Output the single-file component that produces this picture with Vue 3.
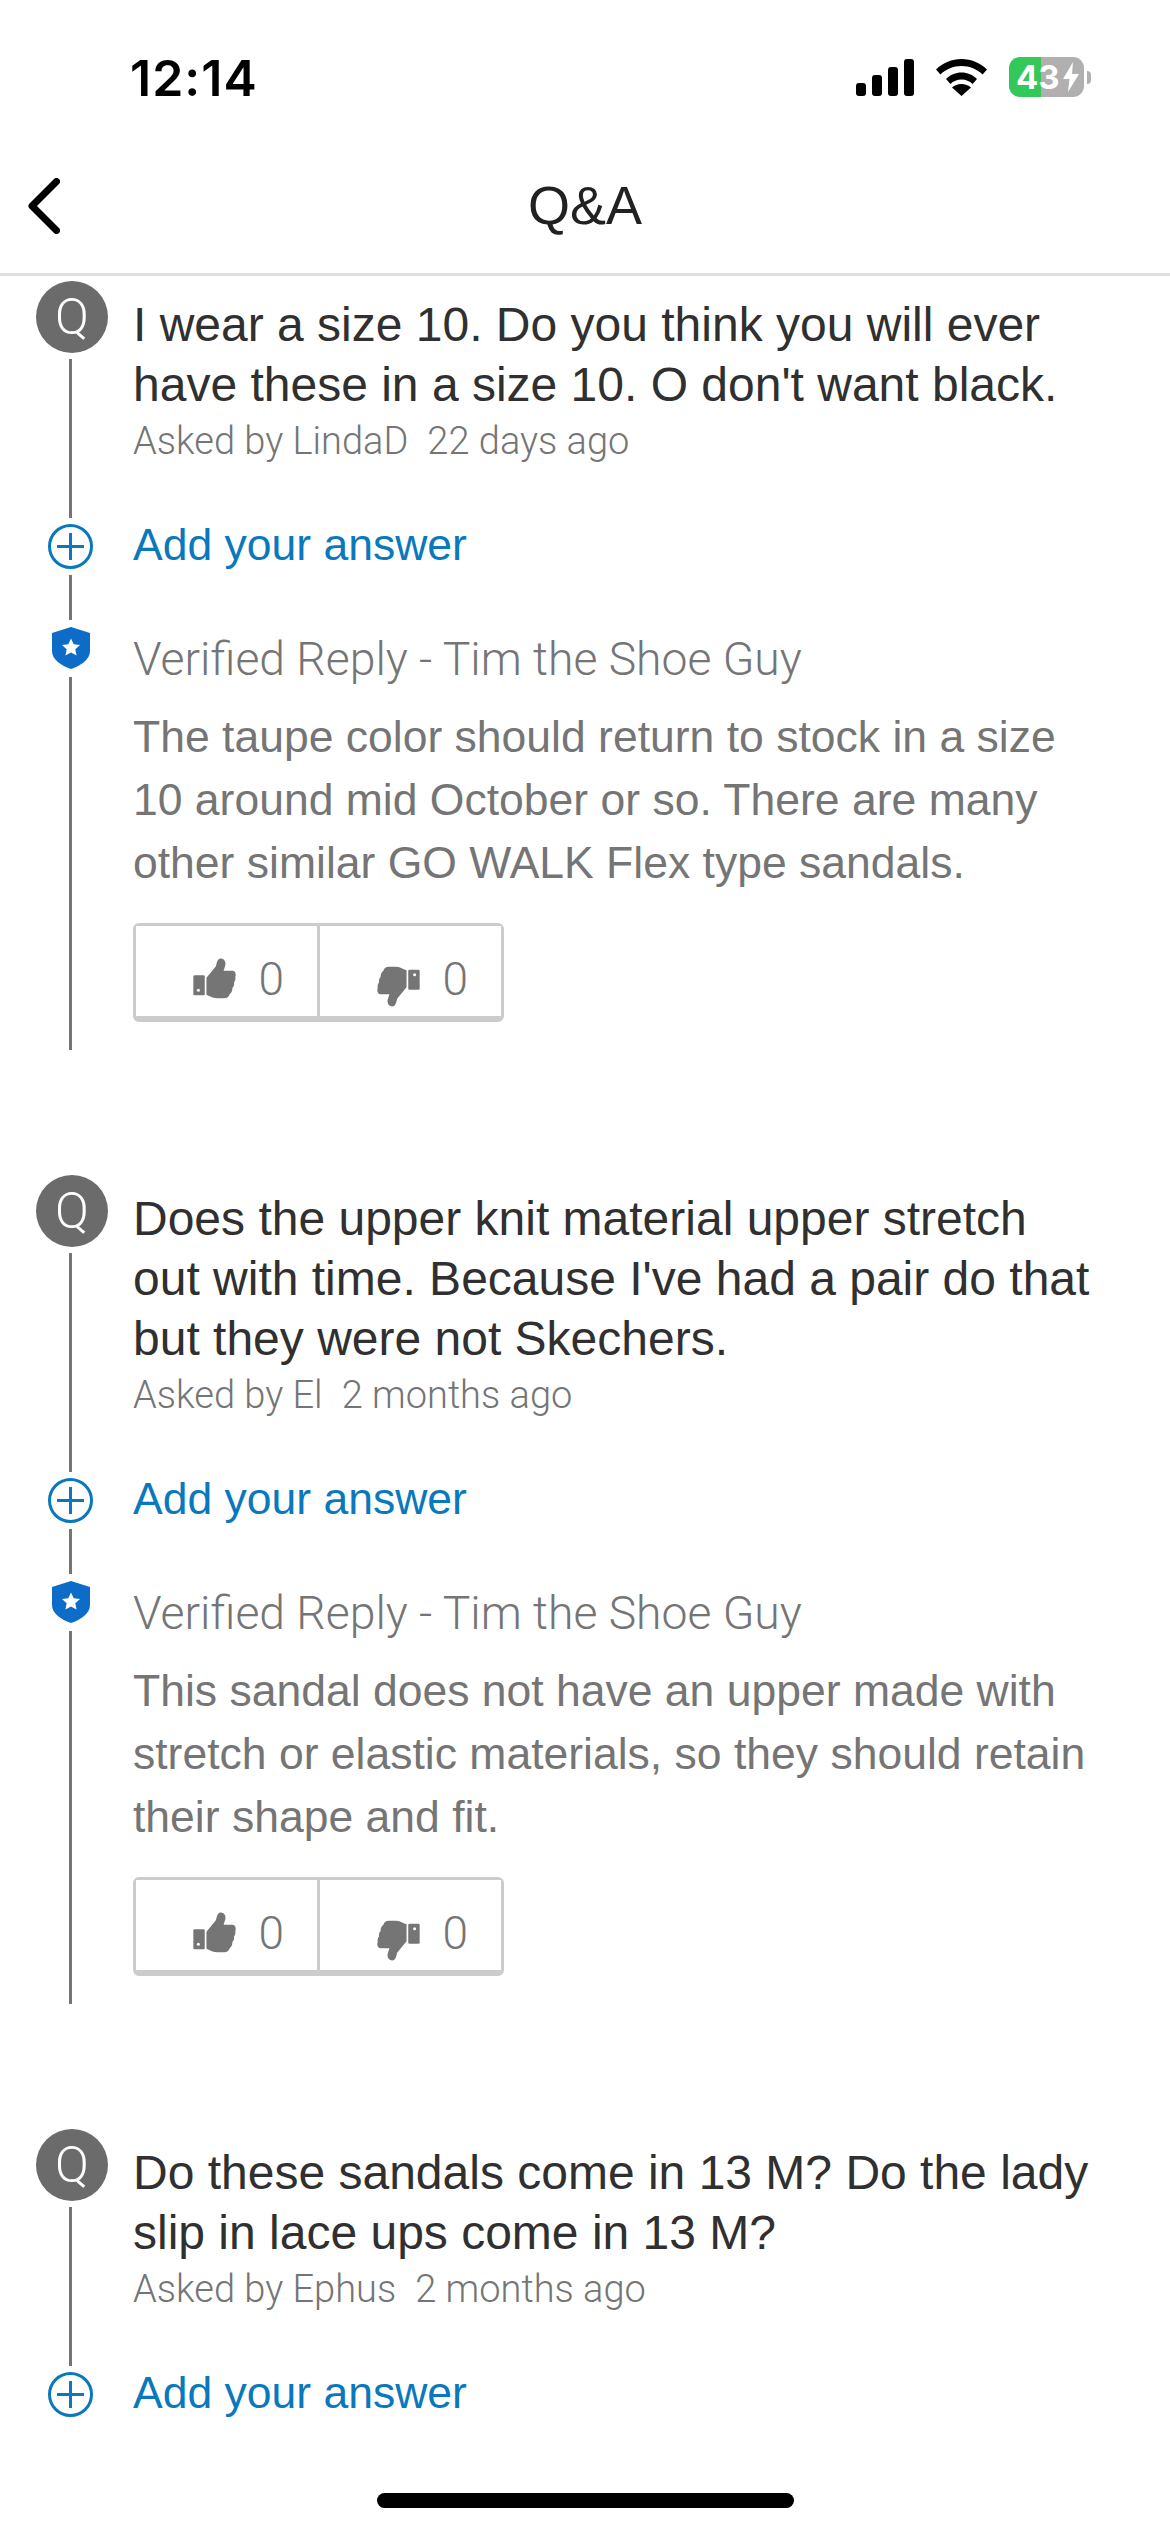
<script setup>
const items = [
    {
        question: "I wear a size 10. Do you think you will ever have these in a size 10. O don't want black.",
        author: 'LindaD',
        age: '22 days ago',
        reply: 'The taupe color should return to stock in a size 10 around mid October or so. There are many other similar GO WALK Flex type sandals.',
    },
    {
        question: "Does the upper knit material upper stretch out with time. Because I've had a pair do that but they were not Skechers.",
        author: 'El',
        age: '2 months ago',
        reply: 'This sandal does not have an upper made with stretch or elastic materials, so they should retain their shape and fit.',
    },
    {
        question: 'Do these sandals come in 13 M? Do the lady slip in lace ups come in 13 M?',
        author: 'Ephus',
        age: '2 months ago',
        reply: '',
    },
];
</script>

<template>
    <div class="screen">
        <div class="status-bar">
            <span class="time">12:14</span>
            <div class="status-icons">
                <svg class="signal" viewBox="0 0 58 37" width="58" height="37">
                    <rect x="0" y="24" width="10" height="13" rx="3" />
                    <rect x="16" y="16" width="10" height="21" rx="3" />
                    <rect x="32" y="8" width="10" height="29" rx="3" />
                    <rect x="48" y="0" width="10" height="37" rx="3" />
                </svg>
                <svg class="wifi" viewBox="0 0 51 37" width="51" height="37">
                    <path d="M0 10.5C7 3.8 15.800 0 25.500 0S44 3.800 51 10.500L46.600 15.500C41 10.200 33.700 7 25.500 7S10 10.200 4.400 15.500Z" />
                    <path d="M10 20C14.200 16 19.500 13.600 25.500 13.600S36.800 16 41 20L36.600 25C33.600 22.200 29.800 20.600 25.500 20.600S17.400 22.200 14.400 25Z" />
                    <path d="M25.500 37L16 28.500C18.500 26.200 21.800 25 25.500 25S32.500 26.200 35 28.500Z" />
                </svg>
                <div class="battery">
                    <div class="battery-body">
                        <span>43</span>
                        <svg viewBox="0 0 16 30" width="16" height="30">
                            <path d="M10 0L0 17H6.500L5 30L16 12H9Z" fill="#fff" />
                        </svg>
                    </div>
                    <i class="battery-cap"></i>
                </div>
            </div>
        </div>

        <header class="nav-bar">
            <svg class="back" viewBox="0 0 32 56" width="32" height="56">
                <path d="M28.500 3.500L4 28L28.500 52.500" fill="none" stroke="#000" stroke-width="7" stroke-linecap="round" stroke-linejoin="round" />
            </svg>
            <h1>Q&amp;A</h1>
        </header>

        <main class="list">
            <section v-for="item in items" :key="item.author" class="qa-item">
                <div class="row question-row">
                    <div class="rail">
                        <span class="q-badge">Q</span>
                        <i class="rail-line"></i>
                    </div>
                    <div class="row-body question-body">
                        <p class="question">{{ item.question }}</p>
                        <p class="meta">
                            <span>Asked by {{ item.author }}</span>
                            <span>{{ item.age }}</span>
                        </p>
                    </div>
                </div>

                <div class="row add-row">
                    <div class="rail">
                        <svg class="plus" viewBox="0 0 45 45" width="45" height="45">
                            <circle cx="22.500" cy="22.500" r="21" fill="none" stroke="#0a78bd" stroke-width="3" />
                            <path d="M22.500 9V36M9 22.500H36" fill="none" stroke="#0a78bd" stroke-width="3" />
                        </svg>
                        <i v-if="item.reply" class="rail-line"></i>
                    </div>
                    <a class="add-link">Add your answer</a>
                </div>

                <div v-if="item.reply" class="row reply-row">
                    <div class="rail rail-reply">
                        <svg class="shield" viewBox="0 0 38 42" width="38" height="42">
                            <path d="M19 0L38 6V24C38 33 28 39 19 42C10 39 0 33 0 24V6Z" fill="#0d6cc8" />
                            <path d="M19 11.500L21.700 17.300L28 18L23.300 22.300L24.600 28.500L19 25.400L13.400 28.500L14.700 22.300L10 18L16.300 17.300Z" fill="#fff" />
                        </svg>
                        <i class="rail-line"></i>
                    </div>
                    <div class="row-body reply-body">
                        <p class="reply-title">Verified Reply - Tim the Shoe Guy</p>
                        <p class="reply-text">{{ item.reply }}</p>
                        <div class="votes">
                            <button v-for="dir in ['up', 'down']" :key="dir" type="button" class="vote">
                                <svg :class="['thumb', dir]" viewBox="250 170 126 122" width="43" height="41">
                                    <rect x="250" y="221" width="34" height="60" rx="4" fill="#757575" />
                                    <circle cx="265" cy="266" r="4.500" fill="#fff" />
                                    <path d="M289 229L316 196C320 190 318 178 328 172C340 170 348 180 345 192L340 208H366C375 208 378 218 375 226C376 234 374 240 371 243C372 250 370 256 366 259C367 268 363 274 358 278C356 286 350 290 342 290H322C310 290 300 284 289 279Z" fill="#757575" />
                                </svg>
                                <span>0</span>
                            </button>
                        </div>
                    </div>
                </div>
            </section>
        </main>

        <footer class="home-bar"><i></i></footer>
    </div>
</template>

<style>
html, body { margin: 0; background: #fff; }
</style>

<style scoped>
.screen{width:1170px;height:2532px;display:flex;flex-direction:column;background:#fff;overflow:hidden;font-family:"Liberation Sans",Arial,sans-serif}
.status-bar{height:160px;flex:none;display:flex;justify-content:space-between;box-sizing:border-box;padding:0 79px 0 130px}
.time{margin-top:50px;font-family:Inter,sans-serif;font-size:50px;font-weight:600;line-height:56px;letter-spacing:1px;color:#000}
.status-icons{display:flex;align-items:flex-start;margin-top:57px;gap:22px}
.signal{margin-top:2px;fill:#000}
.wifi{margin-top:2px;fill:#000}
.battery{display:flex;align-items:center;gap:3px}
.battery-body{width:75px;height:40px;box-sizing:border-box;padding-left:7px;display:flex;align-items:center;gap:3px;border-radius:11px;background:linear-gradient(90deg,#34c759 0,#34c759 32px,#b0b0b0 32px);color:#fff;font-family:Inter,sans-serif;font-size:33px;font-weight:700;line-height:40px}
.battery-cap{width:4px;height:13px;border-radius:0 4px 4px 0;background:#b0b0b0}
.nav-bar{height:116px;flex:none;box-sizing:border-box;position:relative;display:flex;align-items:center;justify-content:center;border-bottom:3px solid #e0e0e0}
.back{position:absolute;left:28px;top:18px}
.nav-bar h1{margin:0 0 24px;font-size:54px;font-weight:400;line-height:64px;color:#212121}
.list{flex:1;min-height:0;overflow:hidden;padding-top:5px}
.qa-item{margin-bottom:125px}
.qa-item:last-child{margin-bottom:0}
.row{display:flex;gap:25px;padding-left:36px}
.rail{flex:none;width:72px;display:flex;flex-direction:column;align-items:center}
.rail-reply{padding-top:7px}
.rail-line{display:block;flex:1;width:3px;margin-top:6px;margin-right:3px;background:#757575}
.question-row .rail-line{margin-bottom:6px}
.reply-row .rail-line{margin-top:8px}
.q-badge{flex:none;width:72px;height:72px;border-radius:50%;background:#6b6b6b;color:#fff;font-family:Roboto,sans-serif;font-size:50px;font-weight:300;line-height:72px;text-align:center}
.plus,.shield{flex:none;display:block;margin-right:3px}
.row-body{flex:1;min-width:0;padding-right:75px}
.question-body{padding-top:14px;padding-bottom:61px}
.question{margin:0;font-size:48px;line-height:60px;color:#303030}
.meta{margin:0;padding-top:4px;display:flex;gap:19px;font-family:Roboto,sans-serif;font-size:38px;font-weight:300;line-height:44px;color:#757575}
.add-row{height:96px}
.add-link{font-size:44.500px;line-height:42px;color:#0a78bd}
.reply-body{padding-top:14px;padding-bottom:28px}
.reply-title{margin:0 0 21px;font-family:Roboto,sans-serif;font-size:46.300px;font-weight:300;line-height:50px;color:#757575}
.reply-text{margin:0 0 29px;font-size:44.500px;line-height:63px;color:#757575}
.votes{display:flex;width:371px;height:99px;box-sizing:border-box;border:3px solid #ccc;border-bottom-width:6px;border-radius:6px}
.vote{flex:1;display:flex;align-items:center;justify-content:flex-end;gap:22px;padding:15px 33px 0 0;border:0;background:#fff;font-family:Roboto,sans-serif;font-size:46px;font-weight:300;color:#757575}
.vote + .vote{border-left:3px solid #ccc}
.thumb.down{transform:rotate(180deg) translateY(-8px)}
.home-bar{flex:none;height:39px;display:flex;justify-content:center}
.home-bar i{display:block;width:417px;height:15px;border-radius:8px;background:#000}
</style>
